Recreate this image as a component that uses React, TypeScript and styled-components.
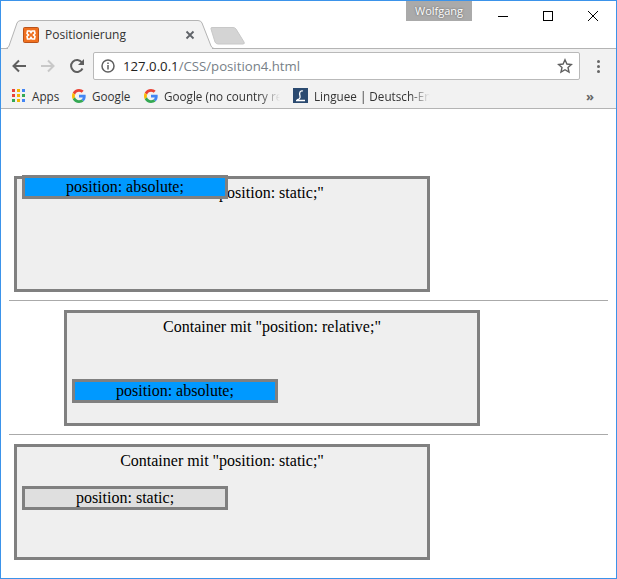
import styled, { createGlobalStyle } from 'styled-components';

const GlobalStyle = createGlobalStyle`
  html, body {
    margin: 0;
    padding: 0;
    background: #fff;
  }
`;

const Frame = styled.div`
  width: 617px;
  height: 579px;
  box-sizing: border-box;
  border: 1px solid #3b93ea;
  display: flex;
  flex-direction: column;
  background: #fff;
  overflow: hidden;
`;

const TitleBar = styled.div`
  height: 47px;
  flex: none;
  display: flex;
  align-items: flex-end;
  padding-left: 5px;
  background: #fff;
  border-bottom: 1px solid #b4b4b4;
`;

const Tab = styled.div`
  position: relative;
  width: 208px;
  height: 29px;
  margin-bottom: -1px;
  display: flex;
  align-items: center;
  padding: 0 19px 0 17px;
  box-sizing: border-box;
  font: 12px 'Open Sans', sans-serif;
  color: #333;

  svg.shape {
    position: absolute;
    left: 0;
    top: 0;
  }
`;

const TabIcon = styled.svg`
  position: relative;
  flex: none;
  margin-right: 6px;
`;

const TabTitle = styled.span`
  position: relative;
  flex: 1;
`;

const TabClose = styled.svg`
  position: relative;
  flex: none;
`;

const NewTab = styled.svg`
  flex: none;
  margin: 0 0 3px -4px;
`;

const Spacer = styled.div`
  flex: 1;
`;

const UserBadge = styled.div`
  align-self: flex-start;
  width: 66px;
  height: 20px;
  background: #aaa;
  color: #fff;
  font: 11px/19px 'Open Sans', sans-serif;
  text-align: center;
  text-shadow: 0 0 2px #555;
`;

const WindowButtons = styled.div`
  align-self: flex-start;
  display: flex;
  width: 144px;
  height: 30px;
  padding-left: 8px;
  box-sizing: border-box;
  flex: none;
`;

const WindowButton = styled.div`
  width: 45px;
  padding-top: 10px;
  display: flex;
  justify-content: center;
  box-sizing: border-box;
  height: 30px;
`;

const Toolbar = styled.div`
  height: 34px;
  flex: none;
  background: #f2f2f2;
  display: flex;
  align-items: center;
  padding-left: 4px;
`;

const NavButton = styled.div`
  width: 28px;
  height: 28px;
  flex: none;
  display: flex;
  align-items: center;
  justify-content: center;
  margin-right: 1px;
`;

const Omnibox = styled.div`
  width: 487px;
  height: 28px;
  margin-left: 1px;
  box-sizing: border-box;
  background: #fff;
  border: 1px solid #b9b9b9;
  border-radius: 2px;
  display: flex;
  align-items: center;
  padding: 0 6px 0 7px;
  font: 13.2px 'Open Sans', sans-serif;
`;

const UrlHost = styled.span`
  color: #222;
  margin-left: 8px;
`;

const UrlPath = styled.span`
  color: #777f88;
  flex: 1;
`;

const MenuDots = styled.div`
  flex: none;
  margin-left: 17px;
  display: flex;
  flex-direction: column;
  gap: 2px;

  i {
    width: 3px;
    height: 3px;
    border-radius: 50%;
    background: #666;
  }
`;

const BookmarkBar = styled.div`
  height: 26px;
  flex: none;
  box-sizing: border-box;
  background: #f2f2f2;
  border-bottom: 1px solid #b4b4b4;
  display: flex;
  align-items: center;
  padding-left: 11px;
  font: 11.7px 'Open Sans', sans-serif;
  color: #333;

  svg {
    flex: none;
  }
`;

const Bookmark = styled.div<{ $width: number; $fade?: boolean }>`
  width: ${(p) => p.$width}px;
  flex: none;
  display: flex;
  align-items: center;
  gap: 6px;
  white-space: nowrap;
  overflow: hidden;
  ${(p) =>
    p.$fade &&
    `mask-image: linear-gradient(to right, #000 85%, transparent 100%);`}
`;

const AppsLabel = styled.span`
  margin-left: 1px;
`;

const LastGap = styled.div`
  width: 13px;
  flex: none;
`;

const Chevrons = styled.div`
  margin-left: auto;
  margin-right: 22px;
  color: #666;
  font: bold 13px 'Open Sans', sans-serif;
`;

const Page = styled.div`
  position: relative;
  flex: 1;
  padding: 67px 8px 0;
  font: 16px/18px 'Liberation Serif', serif;
  color: #000;
  text-align: center;
`;

const Container = styled.div<{ $indent?: number }>`
  width: 416px;
  height: 116px;
  box-sizing: border-box;
  margin-left: ${(p) => 5 + (p.$indent ?? 0)}px;
  padding: 5px;
  border: 3px solid #808080;
  background: #efefef;
  position: ${(p) => (p.$indent ? 'relative' : 'static')};
`;

const Divider = styled.hr`
  margin: 8px 0 9px;
  height: 1px;
  border: 0;
  background: #aaa;
`;

const Caption = styled.div`
  margin-bottom: 16px;
`;

const InnerBox = styled.div<{ $absolute?: boolean }>`
  width: 206px;
  height: 24px;
  box-sizing: border-box;
  border: 3px solid #808080;
  background: ${(p) => (p.$absolute ? '#0099ff' : '#dfdfdf')};
  ${(p) =>
    p.$absolute &&
    `
    position: absolute;
    left: 5px;
    top: 66px;
  `}
`;

const PageBox = styled(InnerBox)`
  left: 21px;
`;

const GoogleIcon = () => (
  <svg width="14" height="14" viewBox="0 0 48 48">
    <path fill="#EA4335" d="M24 9.500c3.500 0 6.700 1.300 9.100 3.500l6.800-6.800C35.800 2.400 30.300 0 24 0 14.600 0 6.500 5.400 2.600 13.200l7.900 6.100C12.400 13.600 17.700 9.500 24 9.500z" />
    <path fill="#4285F4" d="M46.900 24.500c0-1.600-.1-3.100-.4-4.500H24v9h12.900c-.6 3-2.200 5.500-4.700 7.200l7.700 6C44.400 37.900 46.900 31.800 46.900 24.500z" />
    <path fill="#FBBC05" d="M10.500 28.700c-.5-1.500-.8-3-.8-4.700s.3-3.200.8-4.700l-7.900-6.100C.9 16.500 0 20.100 0 24s.9 7.500 2.600 10.800l7.900-6.100z" />
    <path fill="#34A853" d="M24 48c6.500 0 11.900-2.100 15.900-5.800l-7.700-6c-2.200 1.400-4.900 2.300-8.200 2.300-6.300 0-11.600-4.100-13.500-9.800l-7.900 6.100C6.500 42.600 14.600 48 24 48z" />
  </svg>
);

const appColors = ['#e8453c', '#f4b400', '#4285f4', '#e8453c', '#f4b400', '#34a853', '#34a853', '#f4b400', '#4285f4'];

const AppsIcon = () => (
  <svg width="13" height="13" viewBox="0 0 13 13">
    {appColors.map((c, i) => (
      <rect key={i} x={(i % 3) * 5} y={Math.floor(i / 3) * 5} width="3" height="3" fill={c} />
    ))}
  </svg>
);

export default function App() {
  return (
    <>
      <GlobalStyle />
      <Frame>
        <TitleBar>
          <Tab>
            <svg className="shape" width="208" height="29" viewBox="0 0 208 29">
              <path d="M0 28.500 L1 28 Q2 28 3 26 L11 3 Q12 .5 15 .5 L192 .5 Q195 .5 196 3 L205 26 Q206 28 208 28.500 Z" fill="#f2f2f2" stroke="#b4b4b4" />
              <rect x="2" y="28" width="204" height="1" fill="#f2f2f2" />
            </svg>
            <TabIcon width="16" height="16" viewBox="0 0 16 16">
              <rect x=".5" y=".5" width="15" height="15" rx="1" fill="#f0701f" stroke="#b9521a" />
              <path d="M4.500 4H7l1 1.500L9 4h2.500L12 6.500 10.500 8 12 9.500 11.500 12H9l-1-1.500L7 12H4.500L4 9.500 5.500 8 4 6.500z" fill="none" stroke="#fff" strokeWidth="1.600" />
            </TabIcon>
            <TabTitle>Positionierung</TabTitle>
            <TabClose width="10" height="10" viewBox="0 0 10 10">
              <path d="M1.500 1.500l7 7M8.500 1.500l-7 7" stroke="#5f6368" strokeWidth="1.800" />
            </TabClose>
          </Tab>
          <NewTab width="35" height="18" viewBox="0 0 35 18">
            <path d="M1 2 Q.5 .5 2 .5 L23 .5 Q25 .5 26 2 L34 15 Q35 17 33 17 L8 17 Q6 17 5 15 Z" fill="#d4d4d4" stroke="#c8c8c8" />
          </NewTab>
          <Spacer />
          <UserBadge>Wolfgang</UserBadge>
          <WindowButtons>
            <WindowButton>
              <svg width="10" height="10" viewBox="0 0 10 10"><path d="M0 5.500h10" stroke="#000" /></svg>
            </WindowButton>
            <WindowButton>
              <svg width="10" height="10" viewBox="0 0 10 10"><rect x=".5" y=".5" width="9" height="9" fill="none" stroke="#000" /></svg>
            </WindowButton>
            <WindowButton>
              <svg width="10" height="10" viewBox="0 0 10 10"><path d="M0 0l10 10M10 0L0 10" stroke="#000" /></svg>
            </WindowButton>
          </WindowButtons>
        </TitleBar>
        <Toolbar>
          <NavButton>
            <svg width="16" height="16" viewBox="0 0 16 16"><path d="M15 8H2.500M8 2.500L2.500 8l5.500 5.500" fill="none" stroke="#5f5f5f" strokeWidth="2" /></svg>
          </NavButton>
          <NavButton>
            <svg width="16" height="16" viewBox="0 0 16 16"><path d="M1 8h12.500M8 2.500L13.500 8 8 13.500" fill="none" stroke="#c8c8c8" strokeWidth="2" /></svg>
          </NavButton>
          <NavButton>
            <svg width="16" height="16" viewBox="0 0 16 16"><path d="M13.500 10.500A6 6 0 1 1 13 4.500" fill="none" stroke="#5f5f5f" strokeWidth="2" /><path d="M15 1v6H9z" fill="#5f5f5f" /></svg>
          </NavButton>
          <Omnibox>
            <svg width="14" height="14" viewBox="0 0 14 14">
              <circle cx="7" cy="7" r="6" fill="none" stroke="#5f5f5f" strokeWidth="1.500" />
              <path d="M7 6v4.500M7 3.500v1.500" stroke="#5f5f5f" strokeWidth="1.500" />
            </svg>
            <UrlHost>127.0.0.1</UrlHost>
            <UrlPath>/CSS/position4.html</UrlPath>
            <svg width="16" height="16" viewBox="0 0 16 16">
              <path d="M8 1.800l1.900 4.200 4.500.5-3.400 3 1 4.500L8 11.700 4 14l1-4.500-3.400-3 4.500-.5z" fill="none" stroke="#5f5f5f" strokeWidth="1.400" />
            </svg>
          </Omnibox>
          <MenuDots><i /><i /><i /></MenuDots>
        </Toolbar>
        <BookmarkBar>
          <Bookmark $width={60}><AppsIcon /><AppsLabel>Apps</AppsLabel></Bookmark>
          <Bookmark $width={72}><GoogleIcon /><span>Google</span></Bookmark>
          <Bookmark $width={136} $fade><GoogleIcon /><span>Google (no country redirect)</span></Bookmark>
          <LastGap />
          <Bookmark $width={137} $fade>
            <svg width="15" height="15" viewBox="0 0 15 15">
              <rect width="15" height="15" fill="#2b4a70" />
              <path d="M10 3C7 2 6 5 7 8c.5 2-1 4-3 3.500M3 12.500h9" fill="none" stroke="#fff" strokeWidth="1.300" />
            </svg>
            <span>Linguee | Deutsch-Englisch</span>
          </Bookmark>
          <Chevrons>»</Chevrons>
        </BookmarkBar>
        <Page>
          <Container>
            <Caption>Container mit "position: static;"</Caption>
            <PageBox $absolute>position: absolute;</PageBox>
          </Container>
          <Divider />
          <Container $indent={50}>
            <Caption>Container mit "position: relative;"</Caption>
            <InnerBox $absolute>position: absolute;</InnerBox>
          </Container>
          <Divider />
          <Container>
            <Caption>Container mit "position: static;"</Caption>
            <InnerBox>position: static;</InnerBox>
          </Container>
        </Page>
      </Frame>
    </>
  );
}
